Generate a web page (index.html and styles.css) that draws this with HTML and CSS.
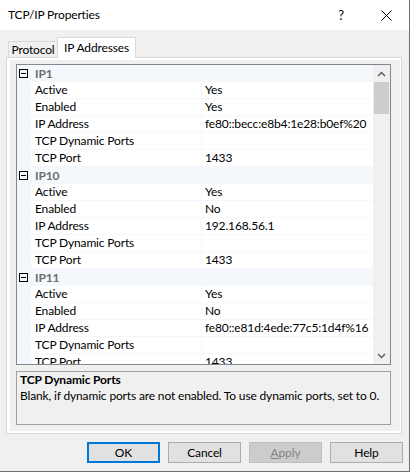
FILE: index.html
```html
<!DOCTYPE html>
<html>
<head>
<meta charset="utf-8">
<link rel="stylesheet" href="styles.css">
</head>
<body>
<div class="window">
  <div class="titlebar">
    <span class="title">TCP/IP Properties</span>
    <span class="help">?</span>
    <span class="close"><svg width="11" height="11" viewBox="0 0 11 11"><path d="M0.5 0.5 L10.5 10.5 M10.5 0.5 L0.5 10.5" stroke="#000" stroke-width="1" fill="none"/></svg></span>
  </div>
  <div class="tabs">
    <div class="tab tab-protocol">Protocol</div>
    <div class="tab tab-active">IP Addresses</div>
  </div>
  <div class="panel">
    <div class="page">
      <div class="grid">
        <div class="rows">
          <div class="cat"><span class="box"></span><span class="cat-name">IP1</span></div>
          <div class="prop"><span class="gutter"></span><span class="name">Active</span><span class="value">Yes</span></div>
          <div class="prop"><span class="gutter"></span><span class="name">Enabled</span><span class="value">Yes</span></div>
          <div class="prop"><span class="gutter"></span><span class="name">IP Address</span><span class="value">fe80::becc:e8b4:1e28:b0ef%20</span></div>
          <div class="prop"><span class="gutter"></span><span class="name">TCP Dynamic Ports</span><span class="value"></span></div>
          <div class="prop"><span class="gutter"></span><span class="name">TCP Port</span><span class="value">1433</span></div>
          <div class="cat"><span class="box"></span><span class="cat-name">IP10</span></div>
          <div class="prop"><span class="gutter"></span><span class="name">Active</span><span class="value">Yes</span></div>
          <div class="prop"><span class="gutter"></span><span class="name">Enabled</span><span class="value">No</span></div>
          <div class="prop"><span class="gutter"></span><span class="name">IP Address</span><span class="value">192.168.56.1</span></div>
          <div class="prop"><span class="gutter"></span><span class="name">TCP Dynamic Ports</span><span class="value"></span></div>
          <div class="prop"><span class="gutter"></span><span class="name">TCP Port</span><span class="value">1433</span></div>
          <div class="cat"><span class="box"></span><span class="cat-name">IP11</span></div>
          <div class="prop"><span class="gutter"></span><span class="name">Active</span><span class="value">Yes</span></div>
          <div class="prop"><span class="gutter"></span><span class="name">Enabled</span><span class="value">No</span></div>
          <div class="prop"><span class="gutter"></span><span class="name">IP Address</span><span class="value">fe80::e81d:4ede:77c5:1d4f%16</span></div>
          <div class="prop"><span class="gutter"></span><span class="name">TCP Dynamic Ports</span><span class="value"></span></div>
          <div class="prop"><span class="gutter"></span><span class="name">TCP Port</span><span class="value">1433</span></div>
        </div>
        <div class="scrollbar">
          <div class="sb-btn"><svg width="9" height="6" viewBox="0 0 9 6"><path d="M1 5 L4.5 1.5 L8 5" stroke="#606060" stroke-width="1.5" fill="none"/></svg></div>
          <div class="thumb"></div>
          <div class="track"></div>
          <div class="sb-btn"><svg width="9" height="6" viewBox="0 0 9 6"><path d="M1 1 L4.5 4.5 L8 1" stroke="#606060" stroke-width="1.5" fill="none"/></svg></div>
        </div>
      </div>
      <div class="desc">
        <div class="desc-title">TCP Dynamic Ports</div>
        <div class="desc-text">Blank, if dynamic ports are not enabled. To use dynamic ports, set to 0.</div>
      </div>
    </div>
  </div>
  <div class="buttons">
    <div class="btn btn-default">OK</div>
    <div class="btn">Cancel</div>
    <div class="btn btn-disabled"><span class="u">A</span>pply</div>
    <div class="btn">Help</div>
  </div>
</div>
</body>
</html>
```
FILE: styles.css
```css
html, body {
  margin: 0;
  padding: 0;
  background: #ffffff;
}
body {
  font-family: Lato, "Noto Sans", sans-serif;
  font-size: 12px;
  letter-spacing: -0.15px;
  color: #000;
}
.window {
  width: 410px;
  height: 472px;
  box-sizing: border-box;
  border-right: 1px solid #707070;
  border-bottom: 1px solid #707070;
  background: #f0f0f0;
  display: flex;
  flex-direction: column;
}
.titlebar {
  height: 30px;
  flex: none;
  background: #fff;
  display: flex;
  align-items: center;
}
.title {
  flex: 1;
  padding-left: 8px;
  line-height: 16px;
}
.help {
  width: 46px;
  text-align: center;
  font-size: 13px;
  line-height: 16px;
}
.close {
  width: 45px;
  height: 30px;
  display: flex;
  align-items: center;
  justify-content: center;
}
.tabs {
  height: 27px;
  flex: none;
  display: flex;
  align-items: flex-end;
  padding-left: 8px;
}
.tab {
  box-sizing: border-box;
  border: 1px solid #d9d9d9;
  border-bottom: none;
  display: flex;
  align-items: center;
  justify-content: center;
  line-height: 14px;
}
.tab-protocol {
  width: 50px;
  height: 16px;
  margin-right: -1px;
  background: #f0f0f0;
}
.tab-active {
  width: 79px;
  height: 21px;
  margin-bottom: -1px;
  background: #fff;
  position: relative;
  z-index: 1;
}
.panel {
  flex: none;
  margin: 0 7px 0 6px;
  height: 377px;
  box-sizing: border-box;
  border: 1px solid #d9d9d9;
  background: #fff;
  padding: 2px 1px 2px 3px;
}
.page {
  height: 100%;
  box-sizing: border-box;
  background: #f0f0f0;
  padding: 4px 9px 6px 6px;
  display: flex;
  flex-direction: column;
  gap: 6px;
}
.grid {
  flex: none;
  height: 301px;
  box-sizing: border-box;
  border: 1px solid #828790;
  background: #fff;
  display: flex;
}
.rows {
  flex: 1;
  overflow: hidden;
}
.cat {
  height: 17px;
  background: #f4f7fc;
  display: flex;
  align-items: center;
  padding-left: 2px;
  box-sizing: border-box;
}
.box {
  width: 9px;
  height: 9px;
  box-sizing: border-box;
  border: 1px solid #000;
  position: relative;
  margin-top: -1px;
}
.box::after {
  content: "";
  position: absolute;
  left: 1px;
  right: 1px;
  top: 3px;
  height: 1px;
  background: #000;
}
.cat-name {
  margin-left: 7px;
  font-weight: bold;
  color: #6d6d6d;
  line-height: 16px;
}
.prop {
  height: 17px;
  box-sizing: border-box;
  border-bottom: 1px solid #f4f7fc;
  display: flex;
}
.gutter {
  width: 14px;
  flex: none;
  background: #f4f7fc;
}
.name {
  width: 171px;
  flex: none;
  box-sizing: border-box;
  padding-left: 4px;
  border-right: 1px solid #f4f7fc;
  line-height: 16px;
  white-space: nowrap;
}
.value {
  flex: 1;
  padding-left: 3px;
  line-height: 16px;
  white-space: nowrap;
}
.scrollbar {
  width: 17px;
  flex: none;
  background: #f0f0f0;
  display: flex;
  flex-direction: column;
}
.sb-btn {
  height: 17px;
  flex: none;
  display: flex;
  align-items: center;
  justify-content: center;
}
.thumb {
  height: 32px;
  flex: none;
  margin: 0 1px;
  background: #cdcdcd;
}
.track {
  flex: 1;
}
.desc {
  flex: none;
  height: 54px;
  box-sizing: border-box;
  border: 1px solid #a0a0a0;
  background: #f0f0f0;
  padding: 0 3px;
  line-height: 16px;
}
.desc-title {
  font-weight: bold;
}
.buttons {
  display: flex;
  justify-content: flex-end;
  gap: 8px;
  padding: 8px 6px 0 0;
}
.btn {
  width: 73px;
  height: 21px;
  box-sizing: border-box;
  border: 1px solid #adadad;
  background: #e1e1e1;
  display: flex;
  align-items: center;
  justify-content: center;
  line-height: 16px;
}
.btn-default {
  border: 2px solid #0078d7;
}
.btn-disabled {
  background: #cccccc;
  border-color: #bfbfbf;
  color: #838383;
}
.u {
  text-decoration: underline;
}
```
